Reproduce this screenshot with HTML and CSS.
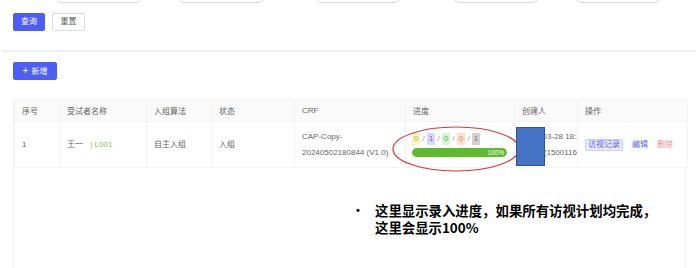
FILE: index.html
```html
<!DOCTYPE html>
<html lang="zh-CN">
<head>
<meta charset="utf-8">
<title>受试者列表</title>
<link rel="stylesheet" href="styles.css">
</head>
<body>
<div class="page">
  <div class="search">
    <div class="fields">
      <div class="field f1"></div>
      <div class="field f2"></div>
      <div class="field f3"></div>
      <div class="field f4"></div>
      <div class="field f5"></div>
    </div>
    <div class="actions">
      <button class="btn btn-primary">查询</button>
      <button class="btn btn-default">重置</button>
    </div>
  </div>
  <div class="divider"></div>
  <div class="toolbar">
    <button class="btn btn-primary btn-add"><span class="plus">+</span>新增</button>
  </div>
  <div class="table-wrap">
    <table class="grid">
      <colgroup>
        <col class="c1"><col class="c2"><col class="c3"><col class="c4"><col class="c5"><col class="c6"><col class="c7"><col class="c8">
      </colgroup>
      <thead>
        <tr>
          <th>序号</th><th>受试者名称</th><th>入组算法</th><th>状态</th><th>CRF</th><th>进度</th><th>创建人</th><th class="fixed">操作</th>
        </tr>
      </thead>
      <tbody>
        <tr>
          <td>1</td>
          <td>王一 <span class="code">| L001</span></td>
          <td>自主入组</td>
          <td>入组</td>
          <td class="crf">CAP-Copy-<br>20240502180844 (V1.0)</td>
          <td class="prog-cell">
            <div class="progress">
              <div class="counts">
                <span class="cnt y">0</span><span class="sl">/</span><span class="cnt p">1</span><span class="sl">/</span><span class="cnt g">0</span><span class="sl">/</span><span class="cnt o">0</span><span class="sl">/</span><span class="cnt n">1</span>
              </div>
              <div class="bar"><div class="fill" style="width:100%">100%</div></div>
            </div>
          </td>
          <td class="creator"><div class="clip">2024-03-28 18:20:36</div><div class="clip">admin(15001160000)</div></td>
          <td class="fixed ops"><span class="tag">访视记录</span><a class="link">编辑</a><a class="link danger">删除</a></td>
        </tr>
      </tbody>
    </table>
    <div class="empty"></div>
  </div>

  <svg class="ellipse" width="132" height="50" viewBox="0 0 132 50"><ellipse cx="65" cy="23" rx="63" ry="22" fill="none" stroke="#d9363e" stroke-width="1.2"/></svg>
  <div class="cover"></div>
  <div class="note">
    <span class="bullet">•</span>
    <p>这里显示录入进度，如果所有访视计划均完成，<br>这里会显示100%</p>
  </div>
</div>
</body>
</html>
```

FILE: styles.css
```css
* { box-sizing: border-box; }
html, body { margin: 0; padding: 0; background: #fff; }
body {
  width: 697px;
  height: 268px;
  overflow: hidden;
  font-family: "Liberation Sans", "Noto Sans CJK SC", sans-serif;
  font-size: 8px;
  color: #666;
}
.page {
  position: relative;
  height: 268px;
  display: flex;
  flex-direction: column;
}
.search { padding: 0 13px; }
.fields {
  display: flex;
  margin-top: -25px;
  height: 28px;
}
.field {
  height: 28px;
  width: 82px;
  border: 1px solid #d8dbe2;
  border-radius: 3px;
  background: #fff;
}
.f1 { margin-left: 45px; }
.f2 { margin-left: 40px; width: 83px; }
.f3 { margin-left: 54px; }
.f4 { margin-left: 56px; }
.f5 { margin-left: 40px; }
.actions {
  display: flex;
  gap: 7px;
  margin-top: 10px;
}
.btn {
  height: 18px;
  padding: 0;
  border-radius: 2px;
  font-family: "Liberation Sans", "Noto Sans CJK SC", sans-serif;
  font-size: 8px;
  line-height: 16px;
  cursor: pointer;
}
.btn-primary {
  width: 32px;
  background: #4d5ef7;
  border: 1px solid #4d5ef7;
  color: #fff;
}
.btn-default {
  width: 33px;
  background: #fff;
  border: 1px solid #dcdcdc;
  color: #666;
}
.divider {
  margin: 19px 1px 0 2px;
  height: 2px;
  background: #f2f2f2;
}
.toolbar { padding: 10px 13px 0; }
.btn-add { width: 44px; }
.plus { font-size: 10px; margin-right: 3px; }

.table-wrap {
  margin: 19px 11px 0 13px;
  flex: 1;
  display: flex;
  flex-direction: column;
  border-left: 1px solid #f4f4f4;
  border-right: 1px solid #f4f4f4;
}
.grid {
  width: 673px;
  border-collapse: collapse;
  table-layout: fixed;
}
.c1 { width: 45px; } .c2 { width: 87px; } .c3 { width: 65px; } .c4 { width: 83px; }
.c5 { width: 111px; } .c6 { width: 109px; } .c7 { width: 63px; } .c8 { width: 110px; }
.grid th, .grid td {
  border: 1px solid #f4f4f4;
  text-align: left;
  font-weight: normal;
  padding: 0 0 0 7px;
  white-space: nowrap;
}
.grid th {
  height: 22px;
  background: #fafafa;
  color: #666;
}
.grid td {
  height: 46px;
  line-height: 16px;
  color: #666;
}
.fixed {
  position: relative;
  background: #fff;
  box-shadow: -3px 0 4px -2px rgba(0,0,0,0.10);
}
.grid th.fixed { background: #fafafa; }
.code { color: #8bc34a; margin-left: 5px; }
.crf { line-height: 16px; padding-top: 1px; }
.grid td.prog-cell { padding-left: 6px; padding-top: 1px; }
.progress { display: flex; flex-direction: column; gap: 3px; }
.counts { display: flex; align-items: center; height: 12px; }
.cnt {
  display: inline-block;
  width: 8px;
  height: 12px;
  line-height: 12px;
  text-align: center;
  font-size: 8px;
}
.sl { width: 7px; text-align: center; color: #999; }
.cnt.y { background: #fbf6c6; color: #c5b300; }
.cnt.p { background: #d6d8fa; color: #636ce6; }
.cnt.g { background: #d6f4db; color: #4cbb3c; }
.cnt.o { background: #fde0cf; color: #ef8552; }
.cnt.n { background: #d2d2d2; color: #7a7a7a; }
.bar {
  width: 95px;
  height: 9px;
  border-radius: 5px;
  background: #ebeef5;
  overflow: hidden;
}
.fill {
  height: 9px;
  border-radius: 5px;
  background: #5dbb2c;
  color: #fff;
  font-size: 6.5px;
  line-height: 9px;
  text-align: right;
  padding-right: 3px;
}
.creator { overflow: hidden; line-height: 14px; }
.clip { overflow: hidden; white-space: nowrap; }
.tag {
  display: inline-block;
  height: 12px;
  line-height: 10px;
  padding: 0 2px;
  border: 1px solid #c9cdfc;
  background: #e8eaff;
  color: #5a63ee;
  border-radius: 2px;
}
.link { color: #5a63ee; margin-left: 9px; }
.link.danger { color: #f28b8b; }
.empty { flex: 1; }

.ellipse {
  position: absolute;
  left: 391px;
  top: 126px;
}
.cover {
  position: absolute;
  left: 516px;
  top: 127px;
  width: 29px;
  height: 39px;
  background: #4472c4;
  border: 1px solid #2f528f;
}
.note {
  position: absolute;
  left: 356px;
  top: 202px;
  display: flex;
  color: #000;
  font-family: "Noto Sans CJK SC", "Liberation Sans", sans-serif;
  font-weight: bold;
  font-size: 13.4px;
  line-height: 17px;
}
.bullet {
  width: 19px;
  font-family: "Liberation Sans", sans-serif;
  font-size: 11px;
}
.note p { margin: 0; }
```
